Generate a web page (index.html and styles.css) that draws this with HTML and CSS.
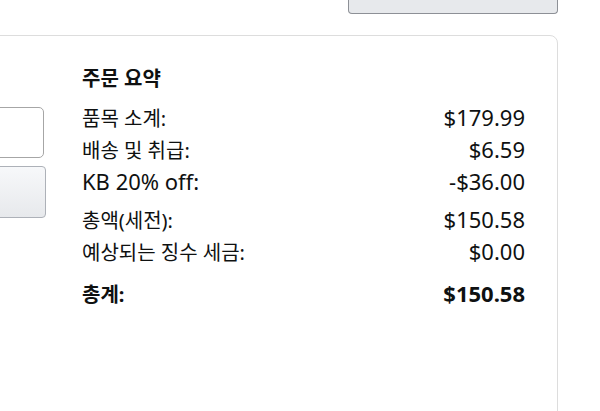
FILE: index.html
```html
<!DOCTYPE html>
<html lang="ko">
<head>
<meta charset="utf-8">
<link rel="stylesheet" href="styles.css">
</head>
<body>
<div class="topbar">
  <button class="top-btn" type="button"></button>
</div>
<section class="card">
  <div class="side">
    <div class="input-box"></div>
    <button class="apply-btn" type="button"></button>
  </div>
  <div class="summary">
    <h2 class="title"><span class="ko">주문 요약</span></h2>
    <div class="row"><span class="ko">품목 소계:</span><span>$179.99</span></div>
    <div class="row"><span class="ko">배송 및 취급:</span><span>$6.59</span></div>
    <div class="row"><span>KB 20% off:</span><span>-$36.00</span></div>
    <div class="row gap-top"><span class="ko">총액(세전):</span><span>$150.58</span></div>
    <div class="row"><span class="ko">예상되는 징수 세금:</span><span>$0.00</span></div>
    <div class="row total"><span class="ko">총계:</span><span>$150.58</span></div>
  </div>
</section>
</body>
</html>
```
FILE: styles.css
```css
html, body {
  margin: 0;
  padding: 0;
  background: #ffffff;
  overflow: hidden;
}
body {
  font-family: "Noto Sans", "Noto Sans CJK KR", sans-serif;
  font-size: 22px;
  color: #0f1111;
}
.ko {
  font-size: 20px;
}
.topbar {
  display: flex;
  justify-content: flex-end;
  padding-right: 42px;
  height: 13px;
}
.top-btn {
  width: 210px;
  height: 14px;
  background: #e7e9ec;
  border: 1px solid #8d9096;
  border-top: none;
  border-radius: 0 0 4px 4px;
  padding: 0;
}
.card {
  display: flex;
  margin: 22px 42px 0 -30px;
  height: 390px;
  border: 1px solid #dddddd;
  border-radius: 8px;
  box-sizing: border-box;
}
.side {
  display: flex;
  flex-direction: column;
  align-items: flex-end;
  width: 75px;
  padding-top: 71px;
  gap: 8px;
}
.input-box {
  width: 73px;
  height: 51px;
  box-sizing: border-box;
  border: 1px solid #a6a6a6;
  border-radius: 5px;
  margin-right: 2px;
  background: #fff;
}
.apply-btn {
  width: 75px;
  height: 52px;
  box-sizing: border-box;
  border: 1px solid #adb1b8;
  border-radius: 4px;
  background: linear-gradient(#f7f8fa, #e7e9ec);
  padding: 0;
}
.summary {
  flex: 1;
  padding: 22px 32px 0 36px;
}
.title {
  margin: 0 0 11px;
  font-weight: 700;
  line-height: 32px;
  height: 32px;
}
.row {
  display: flex;
  justify-content: space-between;
  align-items: baseline;
  line-height: 32px;
  height: 32px;
}
.gap-top {
  margin-top: 6px;
}
.total {
  margin-top: 10px;
  font-weight: 700;
}
```
